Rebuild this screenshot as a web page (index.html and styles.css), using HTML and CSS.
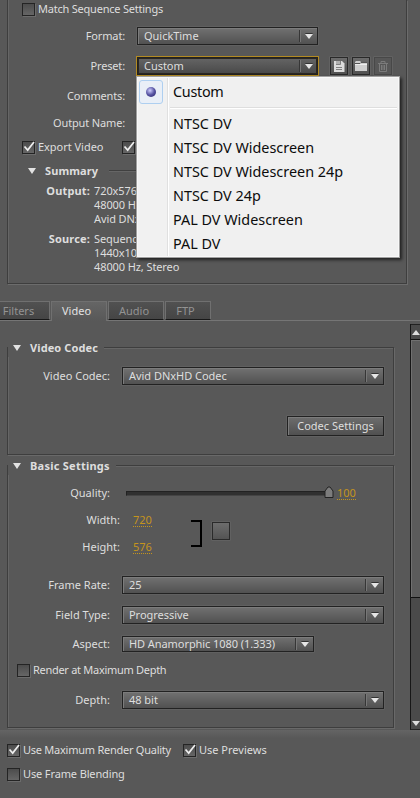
FILE: index.html
```html
<!DOCTYPE html>
<html lang="en">
<head>
<meta charset="utf-8">
<title>Export Settings</title>
<link rel="stylesheet" href="styles.css">
</head>
<body>
<main class="window">
  <section class="export">
    <div class="row row-match"><span class="check"></span><span class="check-label">Match Sequence Settings</span></div>
    <div class="row row-format"><span class="label">Format:</span><div class="select"><span>QuickTime</span><i class="arrow"></i></div></div>
    <div class="row row-preset"><span class="label">Preset:</span>
      <div class="select focus"><span>Custom</span><i class="arrow"></i></div>
      <div class="tools">
        <button class="tool"><svg width="16" height="16" viewBox="0 0 16 16"><path d="M3 3h8l2.500 2.500V14H3z" fill="#dcdcdc"/><path d="M5 3h4v3H5z" fill="#b0b0b0"/><path d="M9.500 3v3.500H5M5 9.500h6M5 11.500h6" stroke="#808080" fill="none"/></svg></button>
        <button class="tool"><svg width="16" height="16" viewBox="0 0 16 16"><path d="M2 4l1-1h4l1 1h5l1 1v8H2z" fill="#cfcfcf"/><path d="M2 5.500h5l1-1h6" stroke="#555" fill="none"/><path d="M2 6.500h12" stroke="#eee"/></svg></button>
        <button class="tool off"><svg width="16" height="16" viewBox="0 0 16 16" fill="none" stroke="#7b7b7b"><path d="M3 5.500h10M6 5V3.500h4V5M4.500 6v7.500h7V6M6.500 7v5M8 7v5M9.500 7v5"/></svg></button>
      </div>
      <div class="menu">
        <div class="item first"><span class="radio"><i></i></span>Custom</div>
        <div class="sep"></div>
        <div class="item">NTSC DV</div>
        <div class="item">NTSC DV Widescreen</div>
        <div class="item">NTSC DV Widescreen 24p</div>
        <div class="item">NTSC DV 24p</div>
        <div class="item">PAL DV Widescreen</div>
        <div class="item">PAL DV</div>
      </div>
    </div>
    <div class="row row-comments"><span class="label">Comments:</span></div>
    <div class="row row-name"><span class="label">Output Name:</span></div>
    <div class="row row-export"><span class="check on"><svg width="14" height="14" viewBox="0 0 14 14"><path d="M2.500 6.500l3.200 3.600L12 2"/></svg></span><span class="check-label first-check">Export Video</span><span class="check on"><svg width="14" height="14" viewBox="0 0 14 14"><path d="M2.500 6.500l3.200 3.600L12 2"/></svg></span></div>
    <div class="row row-summary"><i class="twirl"></i><b>Summary</b><i class="rule"></i></div>
    <dl class="summary">
      <dt>Output:</dt><dd>720x576,<br>48000 Hz<br>Avid DNx</dd>
      <dt>Source:</dt><dd>Sequence<br>1440x108<br>48000 Hz, Stereo</dd>
    </dl>
  </section>

  <nav class="tabs">
    <span class="tab t-filters">Filters</span><span class="tab t-video active">Video</span><span class="tab t-audio">Audio</span><span class="tab t-ftp">FTP</span>
  </nav>

  <div class="pane">
    <div class="content">
      <fieldset class="group codec">
        <legend><i class="twirl"></i><b>Video Codec</b></legend>
        <div class="row row-codec"><span class="label">Video Codec:</span><div class="select"><span>Avid DNxHD Codec</span><i class="arrow"></i></div></div>
        <div class="row row-button"><button class="button">Codec Settings</button></div>
      </fieldset>
      <fieldset class="group basic">
        <legend><i class="twirl"></i><b>Basic Settings</b></legend>
        <div class="row row-quality"><span class="label">Quality:</span>
          <div class="slider"><svg class="knob" width="10" height="14" viewBox="0 0 10 14"><path d="M1 12.500V6L4 2h2l3 4v6.500z" fill="#7c7c7c" stroke="#222"/></svg></div>
          <span class="value">100</span></div>
        <div class="dimensions">
          <div class="fields">
            <div class="row"><span class="label">Width:</span><span class="value">720</span></div>
            <div class="row"><span class="label">Height:</span><span class="value">576</span></div>
          </div>
          <i class="bracket"></i><span class="link"></span>
        </div>
        <div class="row row-rate"><span class="label">Frame Rate:</span><div class="select"><span>25</span><i class="arrow"></i></div></div>
        <div class="row row-field"><span class="label">Field Type:</span><div class="select"><span>Progressive</span><i class="arrow"></i></div></div>
        <div class="row row-aspect"><span class="label">Aspect:</span><div class="select short"><span>HD Anamorphic 1080 (1.333)</span><i class="arrow"></i></div></div>
        <div class="row row-render"><span class="check"></span><span class="check-label">Render at Maximum Depth</span></div>
        <div class="row row-depth"><span class="label">Depth:</span><div class="select"><span>48 bit</span><i class="arrow"></i></div></div>
      </fieldset>
    </div>
    <div class="scrollbar"><div class="up"><i></i></div><div class="thumb"></div><div class="down"><i></i></div></div>
  </div>

  <footer class="footer">
    <div class="row"><span class="check on"><svg width="14" height="14" viewBox="0 0 14 14"><path d="M2.500 6.500l3.200 3.600L12 2"/></svg></span><span class="check-label quality-label">Use Maximum Render Quality</span><span class="check on"><svg width="14" height="14" viewBox="0 0 14 14"><path d="M2.500 6.500l3.200 3.600L12 2"/></svg></span><span class="check-label previews-label">Use Previews</span></div>
    <div class="row"><span class="check"></span><span class="check-label blend-label">Use Frame Blending</span></div>
  </footer>
</main>
</body>
</html>
```
FILE: styles.css
```css
* { box-sizing: border-box; }
body {
  margin: 0;
  background: #585858;
  color: #dedede;
  font: 11px/14px "Noto Sans", "DejaVu Sans Condensed", sans-serif;
  white-space: nowrap;
}
.window { width: 420px; height: 798px; overflow: hidden; display: flex; flex-direction: column; }
button { font: inherit; color: inherit; padding: 0; }
b, dt { font-weight: 700; }

.row { display: flex; align-items: center; }
.label { flex: none; text-align: right; }
.check-label { flex: none; margin-left: 3px; letter-spacing: -.22px; }
.row-render .check-label { letter-spacing: -.29px; }

.export {
  width: 400px;
  height: 284px;
  margin-left: 7px;
  flex: none;
  border: 1px solid #3e3e3e;
  border-top: 0;
  box-shadow: 1px 1px 0 #6c6c6c, inset 1px 0 0 #666;
}
.export .label { width: 117px; margin-right: 12px; letter-spacing: -.15px; }
.export .select { width: 181px; }
.row-match { height: 18px; padding-left: 14px; }
.row-format { height: 36px; }
.row-preset { height: 24px; position: relative; }
.row-comments { height: 36px; }
.row-name { height: 18px; }
.row-export { height: 30px; padding-left: 14px; }
.first-check { width: 84px; letter-spacing: -.03px; }
.row-summary { height: 18px; padding-left: 20px; }
.row-summary b { margin-left: 9px; letter-spacing: .1px; }
.rule { flex: 1; height: 2px; margin: 0 14px 0 11px; background: #404040; border-bottom: 1px solid #666; }
.summary {
  display: grid;
  grid-template-columns: 82px auto;
  column-gap: 4px;
  row-gap: 6px;
  justify-content: start;
  margin: 4px 0 0;
}
.summary dt { text-align: right; letter-spacing: .15px; }
.summary dd { margin: 0; letter-spacing: -.1px; }

.check {
  flex: none;
  width: 13px;
  height: 13px;
  background: linear-gradient(#4c4c4c, #666);
  border: 1px solid #242424;
  box-shadow: 1px 1px 0 #6c6c6c;
}
.check svg { display: block; margin: -2px 0 0 -1px; overflow: visible; fill: none; stroke: #eee; stroke-width: 1.7; }

.select {
  flex: none;
  width: 262px;
  height: 18px;
  padding: 0 0 0 6px;
  display: flex;
  align-items: center;
  justify-content: space-between;
  letter-spacing: -.03px;
  background: linear-gradient(#717171, #515151);
  border: 1px solid #222;
  box-shadow: 0 0 0 .5px #686868, inset 1px 1px 0 #7c7c7c;
}
.select.focus { background: linear-gradient(#656565, #484848); box-shadow: 0 0 0 1px #b38b22, inset 0 0 0 1px #2b2721; }
.select.short { width: 192px; height: 16px; letter-spacing: -.07px; }
.arrow {
  width: 18px;
  height: 12px;
  border-left: 1px solid #363636;
  box-shadow: inset 1px 0 0 #777;
  display: flex;
  align-items: center;
  justify-content: center;
}
.arrow::before {
  content: "";
  border: 4px solid transparent;
  border-top: 5px solid #e6e6e6;
  border-bottom: 0;
  filter: drop-shadow(0 -1px 0 #333);
}
.twirl { border: 4px solid transparent; border-top: 6px solid #e2e2e2; border-bottom: 0; }

.tools { display: flex; gap: 4px; margin-left: 12px; }
.tool {
  width: 18px;
  height: 18px;
  background: linear-gradient(#6c6c6c, #505050);
  border: 1px solid #292929;
  box-shadow: 0 0 0 .5px #6c6c6c;
}
.tool svg { display: block; }
.tool.off { background: #575757; border-color: #484848; }

.menu {
  position: absolute;
  z-index: 2;
  left: 128px;
  top: 22px;
  width: 264px;
  height: 182px;
  padding-top: 1px;
  color: #0c0c0c;
  font: 14.4px/24px "Noto Sans", "Open Sans", sans-serif;
  background: linear-gradient(90deg, #f1f1f1 30px, #e0e0e0 30px, #e0e0e0 31px, #fff 31px, #fff 32px, #f0f0f0 32px);
  border: 1px solid #a0a0a0;
  box-shadow: inset 0 0 0 1px #f8f8f8, 2px 2px 3px #222;
}
.item { height: 24px; padding-left: 36px; }
.item.first { padding-left: 2px; display: flex; align-items: center; height: 27px; line-height: 22px; letter-spacing: -.3px; }
.radio {
  width: 24px;
  height: 24px;
  margin-right: 10px;
  border: 1px solid #aecff0;
  border-radius: 3px;
  background: #e9eff7;
  display: grid;
  place-items: center;
}
.radio i { width: 10px; height: 10px; border-radius: 50%; background: radial-gradient(circle at 40% 35%, #d0d0ff, #5754a2 50%, #242064); }
.sep { height: 2px; margin: 2px 2px 3px 33px; background: #dedede; border-bottom: 1px solid #fff; }

.tabs { flex: none; height: 37px; padding-top: 17px; display: flex; box-shadow: inset 0 -1px 0 #757575; }
.tab {
  height: 19px;
  padding-top: 2px;
  color: #939393;
  text-align: center;
  background: linear-gradient(#515151, #454545);
  border: 1px solid #707070;
  border-bottom: 1px solid #181818;
}
.t-filters { width: 50px; border-left: 0; padding-right: 12px; }
.tab.active { width: 56px; height: 20px; margin: 0 1px; padding-right: 5px; color: #e2e2e2; background: linear-gradient(#656565, #585858); border-bottom: 0; }
.t-audio { width: 56px; padding-right: 4px; }
.t-ftp { width: 46px; margin-left: 1px; padding-right: 5px; }

.pane { flex: none; height: 409px; display: flex; justify-content: space-between; }
.content { padding: 17px 0 0 7px; }
.group {
  width: 387px;
  min-width: 0;
  margin: 0 0 1px;
  padding: 0;
  border: 1px solid #3e3e3e;
  box-shadow: 1px 1px 0 #696969, inset 1px 1px 0 #666;
}
.group legend { height: 19px; margin: 0; padding: 0 6px 0 5px; display: flex; align-items: center; background: #585858; }
.group legend b { margin-left: 9px; letter-spacing: .1px; }
.basic legend b { letter-spacing: .25px; }
.codec { height: 117px; }
.basic { height: 272px; }
.group .label { width: 102px; margin-right: 12px; }
.row-codec { height: 36px; margin-top: 1px; }
.row-button { height: 24px; margin-top: 20px; padding-right: 9px; justify-content: flex-end; }
.button { width: 97px; height: 20px; background: linear-gradient(#6d6d6d, #505050); border: 1px solid #222; box-shadow: 0 0 0 .5px #6b6b6b, inset 1px 1px 0 #7c7c7c; }
.group .row-quality .label { margin-right: 16px; }
.row-quality { height: 28px; margin-top: 4px; }
.slider { position: relative; width: 204px; height: 5px; background: #303030; border: 1px solid #222; border-bottom-color: #444; }
.knob { position: absolute; right: -5px; top: -7px; }
.value { color: #c4941d; line-height: 13px; border-bottom: 1px dotted #c4941d; }
.slider + .value { margin-left: 7px; }
.dimensions { height: 54px; margin-top: -1px; display: flex; align-items: center; }
.dimensions .row { height: 27px; }
.group .dimensions .label { width: 112px; margin-right: 13px; }
.fields { width: 183px; }
.bracket { width: 11px; height: 27px; border: 2px solid #000; border-left: 0; }
.link { width: 18px; height: 18px; margin: -5px 0 0 10px; background: linear-gradient(#6d6d6d, #545454); border: 1px solid #2a2a2a; box-shadow: 0 0 0 .5px #6b6b6b; }
.row-rate { height: 30px; margin-top: 10px; }
.row-field { height: 30px; }
.row-aspect { height: 28px; }
.row-render { height: 24px; padding-left: 9px; }
.row-depth { height: 36px; }

.scrollbar { width: 10px; height: 406px; margin-top: 3px; display: flex; flex-direction: column; background: #4a4a4a; border-left: 1px solid #171717; border-bottom: 1px solid #222; }
.up, .down { height: 15px; display: grid; place-items: center; border-top: 1px solid #222; }
.up i { border: 4px solid transparent; border-bottom: 5px solid #ddd; border-top: 0; }
.down { height: 12px; margin-top: auto; border: 0; }
.down i { border: 4px solid transparent; border-top: 5px solid #ddd; border-bottom: 0; }
.thumb { height: 259px; background: #5b5b5b; border: 1px solid #111; border-width: 1px 0; box-shadow: inset 1px 1px 0 #707070; }

.footer { flex: 1; padding: 8px 0 0 7px; background: linear-gradient(#646464, #585858 8px); }
.footer .row { height: 24px; }
.quality-label { width: 160px; letter-spacing: -.25px; }
.previews-label { letter-spacing: 0; }
.blend-label { letter-spacing: -.13px; }
```
